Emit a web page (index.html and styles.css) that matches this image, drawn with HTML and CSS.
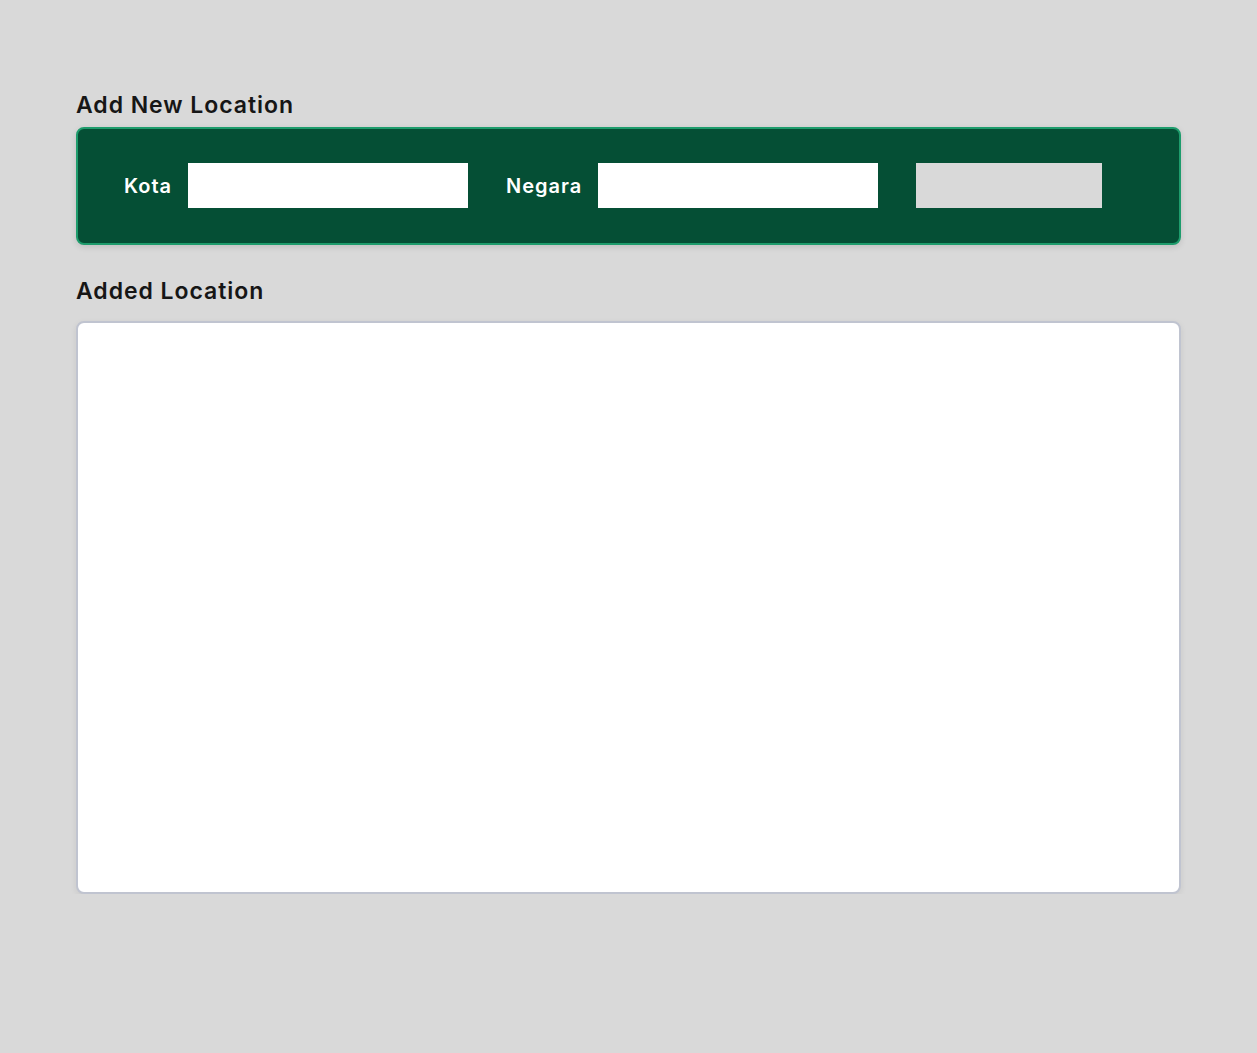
FILE: index.html
```html
<!DOCTYPE html>
<html lang="en">
<head>
<meta charset="utf-8">
<title>Locations</title>
<link rel="stylesheet" href="styles.css">
</head>
<body>
<main class="page">
  <section class="section">
    <h2 class="section-title">Add New Location</h2>
    <form class="add-form">
      <label class="field-label" for="kota">Kota</label>
      <input class="field-input" id="kota" type="text">
      <label class="field-label field-label-gap" for="negara">Negara</label>
      <input class="field-input" id="negara" type="text">
      <button class="add-button" type="button"></button>
    </form>
  </section>
  <section class="section">
    <h2 class="section-title section-title-second">Added Location</h2>
    <div class="location-list"></div>
  </section>
</main>
</body>
</html>
```
FILE: styles.css
```css
* { box-sizing: border-box; }
html, body { margin: 0; padding: 0; }
body {
  background: #d9d9d9;
  font-family: Inter, "Noto Sans", "Liberation Sans", sans-serif;
  color: #161616;
}
.page {
  padding: 89px 76px 0;
}
.section-title {
  margin: 0 0 6px;
  font-size: 23px;
  line-height: 32px;
  font-weight: 600;
  letter-spacing: 0.95px;
}
.section-title-second {
  margin-top: 30px;
  margin-bottom: 14px;
}
.add-form {
  margin: 0;
  display: flex;
  align-items: center;
  background: #054f35;
  border: 2px solid #1e9c6c;
  border-radius: 8px;
  padding: 34px 46px 35px;
  box-shadow: 0 2px 6px rgba(0,0,0,0.12);
}
.field-label {
  color: #ffffff;
  font-size: 20px;
  font-weight: 600;
  letter-spacing: 1px;
  margin-right: 16px;
}
.field-label-gap { margin-left: 38px; }
.field-input {
  width: 280px;
  height: 45px;
  border: none;
  background: #ffffff;
  margin: 0;
  padding: 0 10px;
  outline: none;
}
.add-button {
  width: 186px;
  height: 45px;
  margin-left: 38px;
  border: none;
  background: #d9d9d9;
  padding: 0;
}
.location-list {
  height: 573px;
  background: #ffffff;
  border: 2px solid #c0c4d0;
  border-radius: 8px;
  box-shadow: 0 2px 6px rgba(0,0,0,0.08);
}
```
